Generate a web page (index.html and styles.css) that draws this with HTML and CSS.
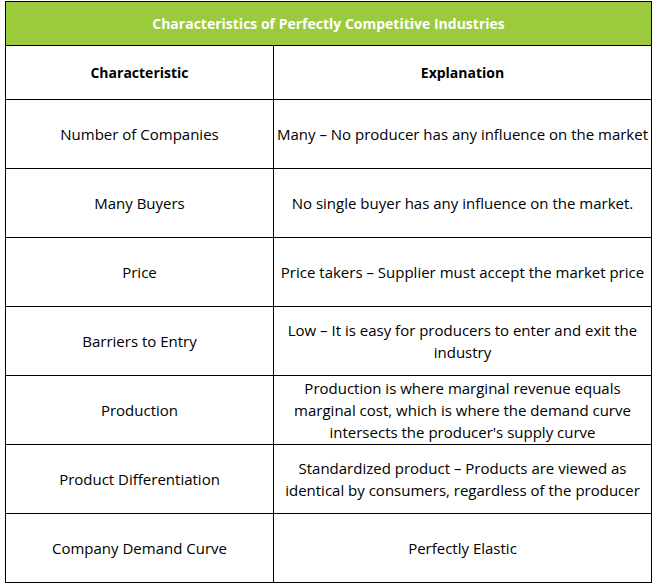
FILE: index.html
```html
<!DOCTYPE html>
<html>
<head>
<meta charset="utf-8">
<link rel="stylesheet" href="styles.css">
</head>
<body>
<table class="chart">
  <colgroup><col class="col-a"><col class="col-b"></colgroup>
  <tr class="title-row"><th colspan="2">Characteristics of Perfectly Competitive Industries</th></tr>
  <tr class="head-row"><th>Characteristic</th><th>Explanation</th></tr>
  <tr><td>Number of Companies</td><td>Many – No producer has any influence on the market</td></tr>
  <tr><td>Many Buyers</td><td>No single buyer has any influence on the market.</td></tr>
  <tr><td>Price</td><td>Price takers – Supplier must accept the market price</td></tr>
  <tr><td>Barriers to Entry</td><td>Low – It is easy for producers to enter and exit the<br>industry</td></tr>
  <tr><td>Production</td><td>Production is where marginal revenue equals<br>marginal cost, which is where the demand curve<br>intersects the producer's supply curve</td></tr>
  <tr><td>Product Differentiation</td><td>Standardized product – Products are viewed as<br>identical by consumers, regardless of the producer</td></tr>
  <tr><td>Company Demand Curve</td><td>Perfectly Elastic</td></tr>
</table>
</body>
</html>
```

FILE: styles.css
```css
html, body {
  margin: 0;
  background: #ffffff;
}
body {
  padding: 1px 0 0 5px;
  font-family: "Open Sans", Lato, sans-serif;
  font-size: 15px;
  color: #000;
}
.chart {
  border-collapse: collapse;
  table-layout: fixed;
  width: 646px;
}
.col-a { width: 268px; }
.col-b { width: 378px; }
.chart th, .chart td {
  border: 1px solid #000;
  padding: 0;
  text-align: center;
  vertical-align: middle;
  line-height: 22px;
  white-space: nowrap;
  overflow: hidden;
}
.chart td {
  height: 68px;
}
.title-row th {
  background: #9bcb3c;
  color: #fff;
  font-weight: bold;
  font-size: 14px;
  height: 43px;
}
.head-row th {
  font-weight: bold;
  font-size: 14px;
  height: 53px;
}
```
